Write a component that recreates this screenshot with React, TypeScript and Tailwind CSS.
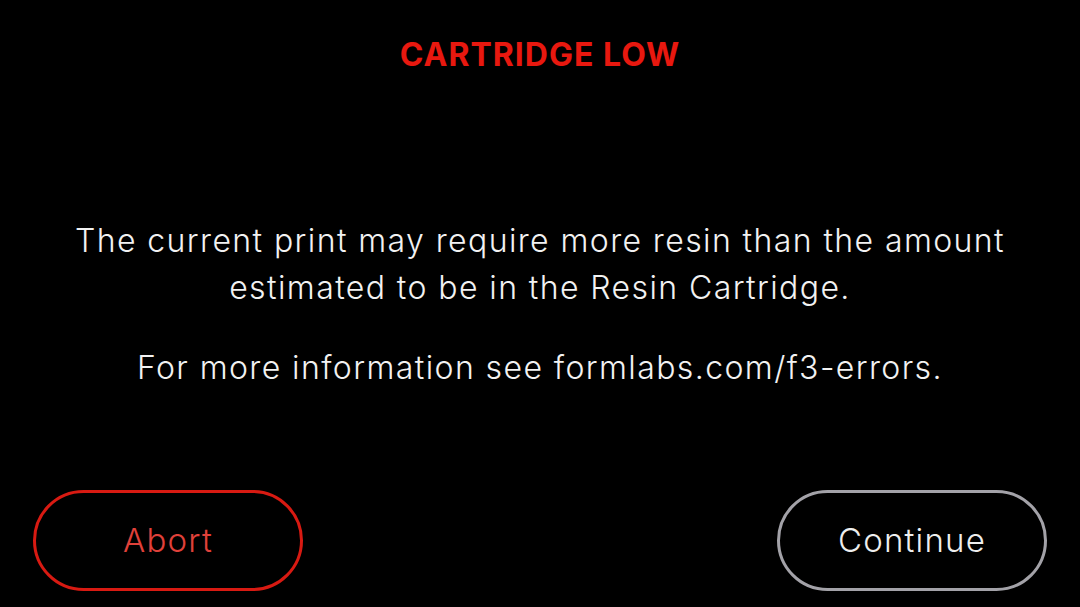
export default function App() {
  return (
    <div className="w-[1080px] h-[607px] bg-black flex flex-col items-center font-['Inter','Open_Sans',sans-serif] select-none">
      <h1 className="mt-[36px] text-[32px] leading-[38px] font-bold text-[#e8180f] tracking-[1px]">CARTRIDGE LOW</h1>
      <div className="mt-[143px] flex flex-col items-center text-center text-[#f2f2f2] font-light text-[32px] tracking-[1.4px]">
        <p className="leading-[47px]">
          The current print may require more resin than the amount
          <br />
          estimated to be in the Resin Cartridge.
        </p>
        <p className="mt-[33px] leading-[47px]">For more information see formlabs.com/f3-errors.</p>
      </div>
      <div className="mt-auto mb-[16px] w-full px-[33px] flex justify-between">
        <button className="w-[270px] h-[101px] rounded-full border-[3px] border-[#d81a12] text-[#e0413a] text-[33px] font-light tracking-[1.2px]">
          Abort
        </button>
        <button className="w-[270px] h-[101px] rounded-full border-[3px] border-[#a3a2a8] text-[#eeeeee] text-[33px] font-light tracking-[1.2px]">
          Continue
        </button>
      </div>
    </div>
  );
}
